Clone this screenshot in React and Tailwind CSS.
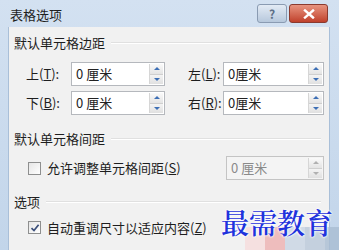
import React from 'react';

const font = { fontFamily: '"Microsoft YaHei", "Noto Sans CJK SC", "Noto Sans", sans-serif' };

function Spinner({ disabled }) {
  return (
    <div className="flex flex-col w-[14px] h-full border-l border-[#d6d6d6]">
      <div className="flex-1 flex items-center justify-center bg-gradient-to-b from-[#fafafa] to-[#e4e4e4] border-b border-[#cfcfcf]">
        <div className={`w-0 h-0 border-x-[3px] border-x-transparent border-b-[3px] ${disabled ? 'border-b-[#b0b0b0]' : 'border-b-[#3d6fb5]'}`} />
      </div>
      <div className="flex-1 flex items-center justify-center bg-gradient-to-b from-[#f4f4f4] to-[#e0e0e0]">
        <div className={`w-0 h-0 border-x-[3px] border-x-transparent border-t-[3px] ${disabled ? 'border-t-[#b0b0b0]' : 'border-t-[#3d6fb5]'}`} />
      </div>
    </div>
  );
}

function NumInput({ value, width, disabled }) {
  return (
    <div className={`flex h-[24px] ${width} border p-[1px] ${disabled ? 'border-[#c4c4c4] bg-[#f4f4f4]' : 'border-[#b5b8bd] bg-white'}`}>
      <div className={`flex-1 flex items-center pl-[3px] text-[13px] ${disabled ? 'text-[#8a8a8a]' : 'text-[#222]'}`}>{value}</div>
      <Spinner disabled={disabled} />
    </div>
  );
}

function Heading({ children }) {
  return (
    <div className="flex items-center h-[20px] pl-[5px] pr-[8px] text-[13px] text-[#1e1e1e]">
      <span>{children}</span>
      <div className="flex-1 ml-[6px] h-[2px] border-t border-[#e0e0e0] border-b border-b-white" />
    </div>
  );
}

function Checkbox({ checked }) {
  return (
    <div className="w-[13px] h-[13px] border border-[#8e8f8f] bg-gradient-to-br from-[#e6e6e6] to-white flex items-center justify-center">
      {checked && (
        <svg width="10" height="10" viewBox="0 0 10 10">
          <path d="M1.5 5.2 L4 7.6 L8.6 1.8" fill="none" stroke="#3b4f7a" strokeWidth="1.7" />
        </svg>
      )}
    </div>
  );
}

export default function App() {
  return (
    <div style={font} className="w-[339px] h-[250px] overflow-hidden flex flex-col bg-gradient-to-b from-[#d3e1f1] to-[#c2d5ea] relative">
      {/* Title bar */}
      <div className="h-[27px] flex items-start shrink-0">
        <div className="pl-[10px] pt-[5px] text-[13px] text-[#1e1e1e] flex-1">表格选项</div>
        <div className="flex pt-[4px] pr-[11px] gap-[2px]">
          <div className="w-[30px] h-[19px] rounded-[3px] border border-[#8a9bb2] bg-gradient-to-b from-[#e3ebf5] to-[#b7c8dc] flex items-center justify-center text-[12px] font-bold text-[#5d6f86]">?</div>
          <div className="w-[39px] h-[19px] rounded-[3px] border border-[#8a3a2f] bg-gradient-to-b from-[#e7937f] to-[#c0402b] flex items-center justify-center">
            <svg width="12" height="10" viewBox="0 0 12 10">
              <path d="M2 1.5 L10 8.5 M10 1.5 L2 8.5" stroke="#fff" strokeWidth="2.4" strokeLinecap="square" />
            </svg>
          </div>
        </div>
      </div>

      {/* Body */}
      <div className="flex-1 ml-[8px] mr-[9px] bg-[#f1f1f1] border-l border-r border-[#a9bfd8] pt-[6px] flex flex-col">
        <Heading>默认单元格边距</Heading>

        <div className="mt-[9px] flex flex-col gap-[5px]">
          <div className="flex items-center">
            <div className="w-[62px] pl-[17px] text-[13px] text-[#1e1e1e]">上(<u>T</u>):</div>
            <NumInput value="0 厘米" width="w-[94px]" />
            <div className="w-[58px] pl-[23px] text-[13px] text-[#1e1e1e]">左(<u>L</u>):</div>
            <NumInput value="0厘米" width="w-[101px]" />
          </div>
          <div className="flex items-center">
            <div className="w-[62px] pl-[17px] text-[13px] text-[#1e1e1e]">下(<u>B</u>):</div>
            <NumInput value="0 厘米" width="w-[94px]" />
            <div className="w-[58px] pl-[23px] text-[13px] text-[#1e1e1e]">右(<u>R</u>):</div>
            <NumInput value="0厘米" width="w-[101px]" />
          </div>
        </div>

        <div className="mt-[14px]">
          <Heading>默认单元格间距</Heading>
        </div>
        <div className="mt-[7px] flex items-center">
          <div className="pl-[19px] flex items-center gap-[6px] w-[217px] text-[13px] text-[#1e1e1e]">
            <Checkbox />
            <span>允许调整单元格间距(<u>S</u>)</span>
          </div>
          <NumInput value="0 厘米" width="w-[98px]" disabled />
        </div>

        <div className="mt-[12px]">
          <Heading>选项</Heading>
        </div>
        <div className="mt-[6px] pl-[19px] flex items-center gap-[6px] text-[13px] text-[#1e1e1e]">
          <Checkbox checked />
          <span>自动重调尺寸以适应内容(<u>Z</u>)</span>
        </div>
      </div>

      {/* Watermark */}
      <div className="absolute left-[215px] top-[203px] w-[124px] h-[47px]">
        <div className="absolute left-[30px] top-[24px] flex">
          <div className="w-[20px] h-[23px] bg-[#f6dcdc] opacity-80" />
          <div className="w-[20px] h-[23px] bg-[#eeb0b0] opacity-80" />
          <div className="w-[20px] h-[23px] bg-[#c8d4e4] opacity-80" />
          <div className="w-[20px] h-[23px] bg-[#b9c8da] opacity-80" />
          <div className="w-[20px] h-[23px] bg-[#a9bdd2] opacity-80" />
        </div>
        <div
          className="relative pl-[6px] -mt-[2px] text-[28px] font-semibold tracking-[0px] text-[#1f33dc]"
          style={{ fontFamily: '"Noto Serif CJK SC", "Noto Sans CJK SC", serif', textShadow: '0 0 2px #fff, 0 0 2px #fff, 0 0 3px #fff' }}
        >
          最需教育
        </div>
      </div>
    </div>
  );
}
